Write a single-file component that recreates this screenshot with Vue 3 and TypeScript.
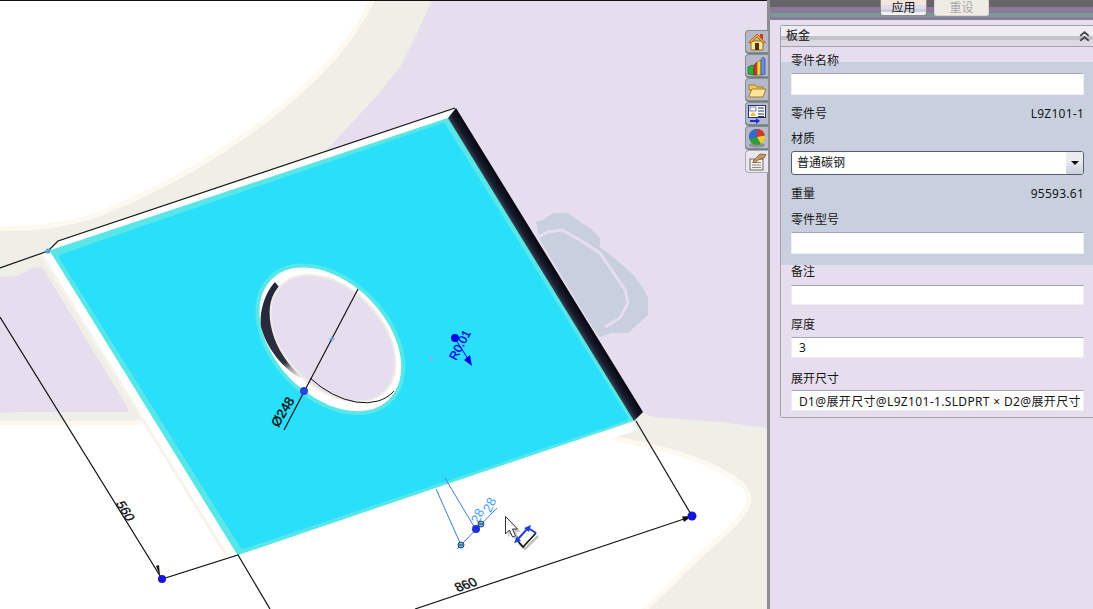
<script setup lang="ts">
import { ref } from 'vue'

type Field = {
  label: string
  value: string
  kind: 'input' | 'text' | 'select'
}

const title = ref('板金')

const fields: Field[] = [
  { label: '零件名称', value: '', kind: 'input' },
  { label: '零件号', value: 'L9Z101-1', kind: 'text' },
  { label: '材质', value: '普通碳钢', kind: 'select' },
  { label: '重量', value: '95593.61', kind: 'text' },
  { label: '零件型号', value: '', kind: 'input' },
  { label: '备注', value: '', kind: 'input' },
  { label: '厚度', value: '3', kind: 'input' },
  { label: '展开尺寸', value: 'D1@展开尺寸@L9Z101-1.SLDPRT × D2@展开尺寸', kind: 'input' },
]
</script>

<template>
  <div class="app">
    <div class="viewport">
      <svg class="scene" width="767" height="608" viewBox="0 1 767 608">
        <defs>
          <linearGradient id="bevel" gradientUnits="userSpaceOnUse" x1="456" y1="108" x2="443" y2="116">
            <stop offset="0" stop-color="#07070f" />
            <stop offset="0.5" stop-color="#181a2c" />
            <stop offset="1" stop-color="#3a6068" />
          </linearGradient>
          <linearGradient id="crescent" gradientUnits="userSpaceOnUse" x1="270" y1="290" x2="302" y2="378">
            <stop offset="0" stop-color="#23273a" />
            <stop offset="0.78" stop-color="#2c3040" />
            <stop offset="0.86" stop-color="#9a9a9e" />
            <stop offset="1" stop-color="#f4f4f4" />
          </linearGradient>
        </defs>

        <!-- background -->
        <rect x="0" y="0" width="767" height="609" fill="#e6deee" />
        <path class="ghost" d="M536 222 L543 220 L553 213 L568 213 L580 222 L590 228 L600 238 L600 247 L613 257 L628 270 L635 277 L643 288 L648 298 L648 315 L640 322 L628 333 L612 333 L600 337 L593 328 L540 240 Z" />
        <path class="ghost-gap" d="M538 237 L548 232 L562 230 L580 240 L600 253 L615 275 L625 290 L628 303 L620 318 L605 327" />
        <path fill="#efefe8" d="M0 0 L432 0 L417 33 L400 67 L373 100 L347 128 L325 152 L640 412 L653 417 L720 422 L767 428 L767 609 L0 609 Z" />
        <path fill="#e6deee" d="M0 277 L16 276 L33 268 L42 267 L128 408 L128 412 L20 412 L0 413 Z" />
        <path class="blob" d="M-5 -5 L372 -5 C350 40 322 70 292 95 C262 122 200 170 100 211 C60 225 30 226 -5 226 Z" />
        <path class="blob" d="M-5 426 L132 426 L300 400 L600 438 C650 448 700 458 735 482 C750 493 750 502 735 520 C715 540 690 560 672 580 C660 592 648 602 637 614 L-5 614 Z" />
        <path class="edge-cream" d="M46 251 L232 553" />
        <path class="edge-white" d="M46 251 L232 553" />
        <path class="edge-white" d="M590 441 L636 426" />

        <!-- plate -->
        <path fill="#ffffff" d="M50 251 L58 242 L455 109 L450 118 Z" />
        <path fill="#58e6e8" stroke="#58e6e8" stroke-width="2" stroke-linejoin="round" d="M51 251 L448 119 L633 420 L238 554 Z" />
        <path fill="#29dff9" stroke="#29dff9" stroke-width="6" stroke-linejoin="round" d="M62 257 L443 126 L625 418 L243 546 Z" />
        <path fill="url(#bevel)" d="M456 108 L643 412 L634 421 L448 118 Z" />

        <!-- hole -->
        <ellipse cx="330.3" cy="339.3" rx="88" ry="60" transform="rotate(46 330.3 339.3)" fill="#58e6e8" />
        <ellipse cx="330.3" cy="339.3" rx="84" ry="56" transform="rotate(46 330.3 339.3)" fill="#ffffff" />
        <path fill="url(#crescent)" d="M275 282 C263 295 258 318 262 330 C268 350 283 368 300 378 L312 372 C305 330 290 300 275 282 Z" />
        <ellipse class="hole-in" cx="333" cy="338.3" rx="74" ry="49" transform="rotate(46 333 338.3)" />
        <path class="hole-edge" d="M310 378 A74 49 46 0 0 394 391" />
        <path class="thin" d="M358 289 L284 430" />
        <path class="tick" d="M429 358 H434 M431.5 355.5 V360.5" stroke="#a4a4e8" />
        <path class="tick" d="M329 339 H335 M332 336 V342" stroke="#5aa8ea" />
        <circle cx="304" cy="391" r="4" fill="#2a45e6" />

        <!-- top and side dimensions -->
        <path class="thin" d="M0 268 L48 251 L58 241 L455 108" />
        <circle cx="48" cy="251" r="2.5" fill="#45a6e2" />
        <path class="thin" d="M0 317 L162 579 L238 555 L270 609" />
        <path class="thin" d="M636 421 L692 516" />
        <path class="thin" d="M415 609 L684 519" />
        <path fill="#111" d="M692 516 L682 516.5 L684 522 Z" />
        <path fill="#111" d="M160 576 L156 566 L159 565 Z" />
        <circle cx="162" cy="579" r="4" fill="#1616d8" />
        <circle cx="692" cy="516" r="4.5" fill="#1616d8" />
        <text class="dim" transform="translate(125 511) rotate(58) skewX(-13)" text-anchor="middle" y="4">560</text>
        <text class="dim" transform="translate(466 585) rotate(-19) skewX(13)" text-anchor="middle" y="4">860</text>
        <text class="dim" transform="translate(283 412) rotate(-59)" text-anchor="middle" y="4">Ø248</text>

        <!-- radius -->
        <path d="M456 340 L470 362" stroke="#0000f0" stroke-width="1" />
        <path fill="#0000f0" d="M472 366 L464 360 L470 355 Z" />
        <circle cx="455" cy="338" r="4" fill="#0000f0" />
        <text class="radius" transform="translate(460 345) rotate(-62)" text-anchor="middle" y="4">R0.01</text>

        <!-- 28 dimension being picked -->
        <path class="pick" d="M436 489 L461 545 M445 478 L476 530 M457 549 L497 508" />
        <text class="pick-text" transform="translate(478 516) rotate(-64)" text-anchor="middle" y="4">28</text>
        <text class="pick-text" transform="translate(490 505) rotate(-64)" text-anchor="middle" y="4">28</text>
        <circle cx="476" cy="529" r="4" fill="#1f2fe0" />
        <circle class="handle" cx="481" cy="524" r="3" />
        <circle class="handle" cx="461" cy="545" r="3" />
        <path d="M459 545 H463 M479 524 H483" stroke="#123" stroke-width="0.8" />

        <!-- cursor -->
        <path fill="#6b6b6b" opacity="0.35" d="M508 519 V537 L512 533 L515 540 L519 539 L516 532 L521 532 Z" />
        <path fill="#fff" stroke="#333" stroke-width="1" d="M505.5 516.5 V534 L509.5 530 L512.5 537 L515.5 536 L512.5 529 L517.5 529 Z" />
        <path fill="none" stroke="#9a9a88" stroke-width="2.5" opacity="0.6" d="M538 536 L525 549 L519 543" />
        <path fill="none" stroke="#111" stroke-width="1.6" d="M536 533 L523 547 L517 540" />
        <path fill="none" stroke="#1f3fe0" stroke-width="2" d="M517 540 L528 528 L536 533" />
        <path fill="#1f3fe0" d="M514 543 L517 536 L521 541 Z M531 525 L524 528 L529 532 Z" />
      </svg>

      <ul class="tabs">
        <li class="tab">
          <svg viewBox="0 0 20 20" width="20" height="20">
            <rect x="13" y="2" width="3" height="6" fill="#c8401c" />
            <path d="M4 9 H16 V18 H4 Z" fill="#ffe79a" stroke="#a56a18" />
            <path d="M10 2 L1.5 10.5 L4 11 L10 5 L16 11 L18.5 10.5 Z" fill="#f2a72e" stroke="#9a5a12" stroke-width="0.8" />
            <rect x="8" y="11" width="4" height="7" fill="#4d3414" />
          </svg>
        </li>
        <li class="tab">
          <svg viewBox="0 0 20 20" width="20" height="20">
            <path d="M1 11 L5 9 L7 10 V19 L1 18 Z" fill="#2fae3a" stroke="#14601c" stroke-width="0.6" />
            <path d="M7 9 L10 6 V19 H7 Z" fill="#d8342a" stroke="#7a1a12" stroke-width="0.6" />
            <path d="M10 6 L14 4 V19 H10 Z" fill="#f4cf3a" stroke="#8a6c10" stroke-width="0.6" />
            <path d="M14 4 L16 1 L18 3 V18 L14 19 Z" fill="#6a90e0" stroke="#1c3a86" stroke-width="0.6" />
          </svg>
        </li>
        <li class="tab">
          <svg viewBox="0 0 20 20" width="20" height="20">
            <path d="M2 5 H8 L10 7 H16 V10 H2 Z" fill="#f0c860" stroke="#a87c1c" />
            <path d="M5 9 H19 L16 17 H1.5 Z" fill="#fde69a" stroke="#a87c1c" />
          </svg>
        </li>
        <li class="tab">
          <svg viewBox="0 0 20 20" width="20" height="20">
            <rect x="1.5" y="1.5" width="17" height="12" fill="#fff" stroke="#26346e" />
            <rect x="3" y="3" width="6" height="4" fill="#ffffff" stroke="#26346e" stroke-width="0.6" />
            <path d="M3.5 10 H8.5 V12 H3.5 Z M4.5 8.5 H7.5 V10 H4.5 Z" fill="#ecc23c" />
            <path d="M11 4 H17 M11 7 H17 M11 10 H17 M11 12.5 H17" stroke="#26346e" />
            <path d="M3 17 H10" stroke="#1a2ee0" stroke-width="2" />
            <path d="M9 14 L13 17 L9 20 Z" fill="#1a2ee0" />
          </svg>
        </li>
        <li class="tab">
          <svg viewBox="0 0 20 20" width="20" height="20">
            <ellipse cx="10" cy="17" rx="8" ry="2.5" fill="#777" opacity="0.6" />
            <circle cx="10" cy="9" r="8" fill="#2f9c3a" />
            <path d="M10 1 A8 8 0 0 0 2.2 11 L10 9 Z" fill="#3366d6" />
            <path d="M10 1 A8 8 0 0 1 17.8 7.5 L10 9 Z" fill="#d8342a" />
            <path d="M17.8 7.5 A8 8 0 0 1 14 16 L10 9 Z" fill="#f2cb3a" />
          </svg>
        </li>
        <li class="tab active">
          <svg viewBox="0 0 20 20" width="20" height="20">
            <rect x="3" y="7" width="13" height="11" fill="#f4f0e8" stroke="#6a6a6a" />
            <path d="M5 10.5 H14 M5 13 H14 M5 15.5 H14" stroke="#8a8a8a" />
            <path d="M6 9 L13 2 L19 2.5 L17 6 L11 8 L8 11 Z" fill="#c49a62" stroke="#6a4a24" stroke-width="0.7" />
          </svg>
        </li>
      </ul>
    </div>

    <aside class="side">
      <div class="actions">
        <button class="btn apply">应用</button>
        <button class="btn reset" disabled>重设</button>
      </div>

      <section class="group">
        <header class="group-head">
          <span>{{ title }}</span>
          <svg class="chevrons" viewBox="0 0 9 9" width="11" height="11">
            <path d="M1 4 L4.5 1 L8 4 M1 8 L4.5 5 L8 8" fill="none" stroke="#444" stroke-width="1.5" />
          </svg>
        </header>
        <div class="group-body">
          <div v-for="f in fields" :key="f.label" class="field" :class="f.kind">
            <template v-if="f.kind === 'text'">
              <label>{{ f.label }}</label>
              <span class="value">{{ f.value }}</span>
            </template>
            <template v-else-if="f.kind === 'select'">
              <label>{{ f.label }}</label>
              <div class="combo">
                <span>{{ f.value }}</span>
                <i class="combo-arrow"></i>
              </div>
            </template>
            <template v-else>
              <label>{{ f.label }}</label>
              <input type="text" :value="f.value" readonly />
            </template>
          </div>
        </div>
      </section>
    </aside>
  </div>
</template>

<style>
html,
body {
  margin: 0;
  background: #e6deee;
}
</style>

<style scoped>
.app {
  display: flex;
  width: 1093px;
  height: 609px;
  overflow: hidden;
  font-family: "Noto Sans", "Noto Sans CJK SC", sans-serif;
  font-size: 12px;
  line-height: 14px;
  color: #161616;
}
.viewport {
  position: relative;
  width: 767px;
  flex: none;
  border-top: 1px solid #111;
  box-sizing: border-box;
}
.scene {
  display: block;
}
.ghost {
  fill: #c8cfde;
}
.ghost-gap {
  fill: none;
  stroke: #e6deee;
  stroke-width: 3;
}
.blob {
  fill: #ffffff;
  stroke: #fdf9ef;
  stroke-width: 10;
  paint-order: stroke;
}
.edge-cream {
  stroke: #f5f3ea;
  stroke-width: 15;
  fill: none;
}
.edge-white {
  stroke: #fff;
  stroke-width: 9;
  fill: none;
}
.hole-in {
  fill: #e6deee;
  stroke: #efece4;
  stroke-width: 2;
}
.hole-edge {
  fill: none;
  stroke: #111;
  stroke-width: 1;
}
.thin {
  fill: none;
  stroke: #151515;
  stroke-width: 1.2;
}
.tick {
  fill: none;
  stroke-width: 1;
}
.dim {
  font-family: "Liberation Sans", sans-serif;
  font-size: 13px;
  fill: #111;
  stroke: #111;
  stroke-width: 0.4;
}
.radius {
  font-family: "Liberation Sans", sans-serif;
  font-size: 12px;
  fill: #0000f0;
  stroke: #0000f0;
  stroke-width: 0.3;
}
.pick {
  fill: none;
  stroke: #3a7de8;
  stroke-width: 1;
}
.pick-text {
  font-family: "Liberation Sans", sans-serif;
  font-size: 13px;
  fill: #4a9af0;
}
.handle {
  fill: #6ab8ee;
  stroke: #123;
  stroke-width: 0.8;
}

.tabs {
  position: absolute;
  top: 29px;
  right: -1px;
  width: 23px;
  margin: 0;
  padding: 0;
  list-style: none;
  display: flex;
  flex-direction: column;
  gap: 1px;
}
.tab {
  height: 23px;
  box-sizing: border-box;
  display: flex;
  align-items: center;
  justify-content: center;
  background: #b8b8cc;
  border: 1px solid #80908f;
  border-right: none;
  border-radius: 4px 0 0 4px;
  box-shadow: 0 1px 0 #6f7f7f;
}
.tab.active {
  background: #ece6f2;
  border-color: #a6b0b0;
  box-shadow: none;
}

.side {
  width: 326px;
  flex: none;
  box-sizing: border-box;
  border-left: 3px solid;
  border-image: linear-gradient(90deg, #8e8e92 0 33%, #3f6aa6 33% 66%, #c9c9d2 66%) 1;
  background: #e6deee;
}
.actions {
  display: flex;
  align-items: flex-start;
  gap: 7px;
  height: 20px;
  padding-left: 110px;
  background: linear-gradient(#66656a 0 7px, #8b7a9c 7px 13px, #7a9a94 13px 17px, #8b7a9c 17px 20px);
}
.btn {
  height: 16px;
  padding: 0;
  font: inherit;
  line-height: 9px;
  color: #111;
  border: 1px solid #8a8a8a;
  border-top: none;
  border-radius: 0 0 3px 3px;
  overflow: hidden;
  background: linear-gradient(#f4e6dc 0 5px, #e0dcea 5px 9px, #c8cfde 9px 12px, #f4f2ee 12px);
}
.apply {
  width: 47px;
}
.reset {
  width: 55px;
  color: #a8a8a8;
  background: #efece6;
  border-color: #d8d8d0;
}

.group {
  margin: 5px 0 0 10px;
  border: 1px solid #a2a2aa;
  border-right: none;
  border-radius: 3px 0 0 3px;
}
.group-head {
  height: 21px;
  box-sizing: border-box;
  display: flex;
  align-items: center;
  justify-content: space-between;
  padding: 0 3px 0 5px;
  font-weight: 500;
  color: #333;
  border-bottom: 1px solid #a2a2aa;
  background: linear-gradient(#f0ecf4 0 10px, #c2c2c8 10px 14px, #ddd9e3 14px);
}
.group-body {
  padding: 6px 9px 6px 10px;
  background: linear-gradient(#e6deee 0 15px, #c8cfde 15px 218px, #e6deee 218px);
}
.field label {
  display: block;
  padding-top: 1px;
  margin-bottom: -1px;
}
.field .value {
  padding-top: 1px;
  letter-spacing: 0.25px;
}
.field.text {
  display: flex;
  justify-content: space-between;
}
.field + .field {
  margin-top: 11px;
}
.field input {
  display: block;
  width: 100%;
  height: 22px;
  box-sizing: border-box;
  margin-top: 6px;
  padding: 0 0 0 7px;
  font: inherit;
  color: #161616;
  background: #fff;
  border: 1px solid #f0eef4;
  border-top-color: #a8a4b4;
  outline: none;
}
.field:nth-child(3) {
  margin-top: 10px;
}
.field:nth-child(6) {
  margin-top: 10px;
}
.field:nth-child(6) input {
  height: 20px;
  margin-top: 7px;
}
.field:nth-child(7) {
  margin-top: 12px;
}
.field:nth-child(7) input,
.field:nth-child(8) input {
  height: 21px;
}
.field:nth-child(8) {
  margin-top: 13px;
}
.field:nth-child(8) input {
  margin-top: 5px;
  letter-spacing: 0.35px;
}
.combo {
  display: flex;
  align-items: center;
  justify-content: space-between;
  height: 24px;
  box-sizing: border-box;
  margin-top: 6px;
  padding-left: 5px;
  background: #fff;
  border: 1px solid #5c5c68;
  border-radius: 3px;
  overflow: hidden;
}
.combo-arrow {
  position: relative;
  width: 17px;
  height: 100%;
  background: linear-gradient(#ececf0 0 40%, #c8cfde 100%);
}
.combo-arrow::after {
  content: "";
  position: absolute;
  top: 9px;
  left: 5px;
  border: 4px solid transparent;
  border-top: 4px solid #111;
}
</style>
